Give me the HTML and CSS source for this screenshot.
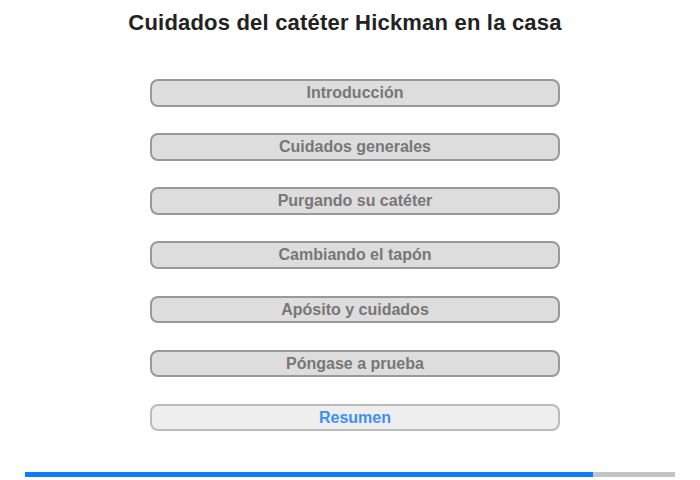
FILE: index.html
```html
<!DOCTYPE html>
<html lang="es">
<head>
<meta charset="utf-8">
<link rel="stylesheet" href="styles.css">
</head>
<body>
<div class="page">
  <h1 class="title">Cuidados del catéter Hickman en la casa</h1>
  <nav class="menu">
    <div class="item">Introducción</div>
    <div class="item">Cuidados generales</div>
    <div class="item">Purgando su catéter</div>
    <div class="item">Cambiando el tapón</div>
    <div class="item">Apósito y cuidados</div>
    <div class="item">Póngase a prueba</div>
    <div class="item current">Resumen</div>
  </nav>
  <div class="progress"><div class="fill" style="width:87.4%"></div></div>
</div>
</body>
</html>
```
FILE: styles.css
```css
html, body { margin: 0; padding: 0; background: #fff; }
.page {
  width: 700px;
  height: 480px;
  font-family: "Liberation Sans", Arial, sans-serif;
}
.title {
  margin: 0;
  padding-top: 10px;
  padding-right: 10px;
  font-size: 22px;
  letter-spacing: 0.2px;
  line-height: 26px;
  font-weight: bold;
  color: #222;
  text-align: center;
}
.menu {
  display: flex;
  flex-direction: column;
  gap: 26.67px;
  margin: 43px 0 0 150px;
  width: 410px;
}
.item {
  box-sizing: border-box;
  height: 27.5px;
  border: 2px solid #999;
  border-radius: 8px;
  background: #ddd;
  color: #777;
  font-size: 16px;
  font-weight: bold;
  line-height: 24px;
  text-align: center;
}
.item.current {
  background: #eee;
  border-color: #bbb;
  color: #3d8ef8;
}
.progress {
  margin: 41px 0 0 25px;
  width: 650px;
  height: 5px;
  background: #c4c4c4;
}
.fill {
  height: 100%;
  background: #0a7cff;
}
```
